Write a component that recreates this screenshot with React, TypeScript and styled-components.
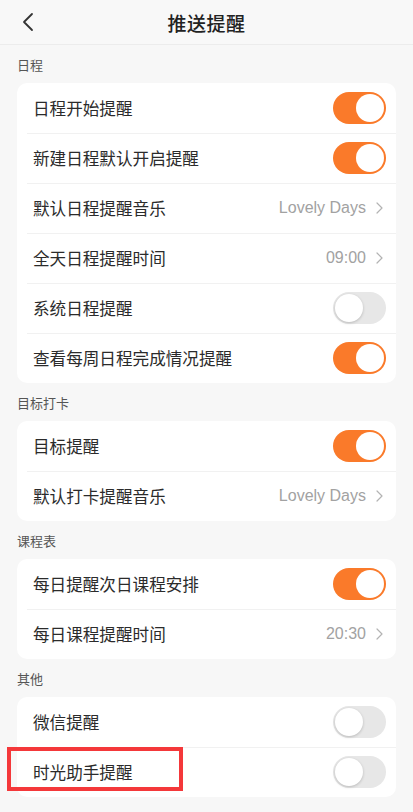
import React from 'react';
import styled, { createGlobalStyle } from 'styled-components';

const GlobalStyle = createGlobalStyle`
  html, body {
    margin: 0;
    padding: 0;
    background: #f7f7f7;
  }
  body {
    font-family: "Noto Sans CJK SC", "Noto Sans", sans-serif;
  }
`;

const Page = styled.div`
  width: 413px;
  min-height: 812px;
  background: #f7f7f7;
  overflow: hidden;
`;

const Header = styled.div`
  position: relative;
  height: 45px;
  display: flex;
  align-items: center;
  justify-content: center;
  border-bottom: 1px solid #ececec;
  box-sizing: border-box;
  background: #f8f8f8;
`;

const Back = styled.div`
  position: absolute;
  left: 17px;
  top: 11px;
  width: 22px;
  height: 22px;
  display: flex;
  align-items: center;
  justify-content: center;
`;

const Title = styled.div`
  font-size: 19px;
  font-weight: 500;
  color: #222;
  letter-spacing: 0.5px;
`;

const SectionLabel = styled.div`
  padding: 11px 17px 9px;
  line-height: 18px;
  font-size: 13px;
  color: #555;
`;

const Card = styled.div`
  margin: 0 17px;
  background: #fff;
  border-radius: 10px;
`;

const Row = styled.div`
  position: relative;
  height: 50px;
  display: flex;
  align-items: center;
  justify-content: space-between;
  padding: 0 10px 0 16px;
  & + & {
    &::before {
      content: '';
      position: absolute;
      left: 10px;
      right: 0;
      top: 0;
      height: 1px;
      background: #f1f1f1;
    }
  }
`;

const Label = styled.span`
  font-size: 16.6px;
  color: #2b2b2b;
`;

const Value = styled.span`
  display: flex;
  align-items: center;
  gap: 10px;
  font-family: "Liberation Sans", Arial, sans-serif;
  font-size: 16px;
  color: #a2a2a2;
  padding-right: 3px;
`;

const Toggle = styled.span<{ $on: boolean }>`
  position: relative;
  width: 53px;
  height: 32px;
  border-radius: 16px;
  background: ${(p) => (p.$on ? '#fa7a2a' : '#e7e7e7')};
  &::after {
    content: '';
    position: absolute;
    top: 2px;
    left: ${(p) => (p.$on ? '23px' : '2px')};
    width: 28px;
    height: 28px;
    border-radius: 50%;
    background: #fff;
    box-shadow: ${(p) => (p.$on ? 'none' : '0 1px 3px rgba(0,0,0,0.2)')};
  }
`;

const Highlight = styled.div`
  position: absolute;
  left: -10px;
  top: 0;
  width: 176px;
  height: 44px;
  border: 4px solid #f4383a;
  box-sizing: border-box;
  pointer-events: none;
`;

const Chevron = () => (
  <svg width="7" height="12" viewBox="0 0 7 12">
    <path d="M1 1l5 5-5 5" fill="none" stroke="#b3b3b3" strokeWidth="1.2" strokeLinecap="round" strokeLinejoin="round" />
  </svg>
);

type Item = { label: string; on?: boolean; value?: string; mark?: boolean };

const sections: { title: string; items: Item[] }[] = [
  {
    title: '日程',
    items: [
      { label: '日程开始提醒', on: true },
      { label: '新建日程默认开启提醒', on: true },
      { label: '默认日程提醒音乐', value: 'Lovely Days' },
      { label: '全天日程提醒时间', value: '09:00' },
      { label: '系统日程提醒', on: false },
      { label: '查看每周日程完成情况提醒', on: true },
    ],
  },
  {
    title: '目标打卡',
    items: [
      { label: '目标提醒', on: true },
      { label: '默认打卡提醒音乐', value: 'Lovely Days' },
    ],
  },
  {
    title: '课程表',
    items: [
      { label: '每日提醒次日课程安排', on: true },
      { label: '每日课程提醒时间', value: '20:30' },
    ],
  },
  {
    title: '其他',
    items: [
      { label: '微信提醒', on: false },
      { label: '时光助手提醒', on: false, mark: true },
    ],
  },
];

const App: React.FC = () => (
  <Page>
    <GlobalStyle />
    <Header>
      <Back>
        <svg width="12" height="20" viewBox="0 0 12 20">
          <path d="M10 2L2 10l8 8" fill="none" stroke="#333" strokeWidth="1.8" strokeLinecap="round" strokeLinejoin="round" />
        </svg>
      </Back>
      <Title>推送提醒</Title>
    </Header>
    {sections.map((s) => (
      <div key={s.title}>
        <SectionLabel>{s.title}</SectionLabel>
        <Card>
          {s.items.map((it) => (
            <Row key={it.label}>
              <Label>{it.label}</Label>
              {it.value !== undefined ? (
                <Value>
                  {it.value}
                  <Chevron />
                </Value>
              ) : (
                <Toggle $on={!!it.on} />
              )}
              {it.mark && <Highlight />}
            </Row>
          ))}
        </Card>
      </div>
    ))}
  </Page>
);

export default App;
